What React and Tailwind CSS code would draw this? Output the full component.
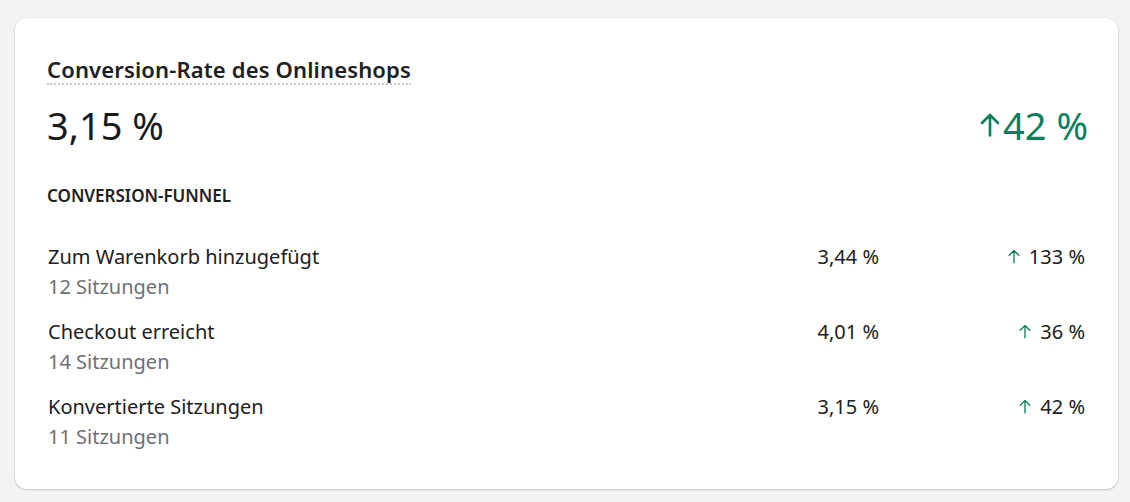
const rows = [
  { label: 'Zum Warenkorb hinzugefügt', sessions: '12 Sitzungen', rate: '3,44 %', change: '133 %' },
  { label: 'Checkout erreicht', sessions: '14 Sitzungen', rate: '4,01 %', change: '36 %' },
  { label: 'Konvertierte Sitzungen', sessions: '11 Sitzungen', rate: '3,15 %', change: '42 %' },
];

function ArrowUp({ className, width = 2 }) {
  return (
    <svg viewBox="0 0 20 24" fill="none" stroke="currentColor" strokeWidth={width} strokeLinecap="round" strokeLinejoin="round" className={className}>
      <path d="M10 22.5V2M2 10L10 2L18 10" />
    </svg>
  );
}

export default function App() {
  return (
    <div className="min-h-[502px] w-[1130px] bg-[#f3f3f5] pl-[15px] pr-[12px] pt-[18px] font-['Noto_Sans','Open_Sans',sans-serif]">
      <div className="rounded-[12px] bg-white pb-[37px] pl-[32px] pr-[30px] pt-[37px] shadow-[0_1px_2px_rgba(0,0,0,0.18),0_0_0_1px_rgba(0,0,0,0.03)]">
        {/* headline */}
        <div className="flex">
          <span className="border-b-2 border-dotted border-[#c9c9cc] text-[22px] font-semibold leading-[28px] tracking-[0.15px] text-[#202020]">
            Conversion-Rate des Onlineshops
          </span>
        </div>
        <div className="mt-[16px] flex items-center justify-between">
          <span className="text-[38px] leading-[48px] text-[#1a1a1a]">3,15 %</span>
          <span className="flex items-center text-[38px] leading-[48px] text-[#0c7f5d]">
            <ArrowUp width={2.6} className="mr-[3px] h-[24px] w-[20px]" />
            42 %
          </span>
        </div>

        <div className="mt-[37px] text-[17px] font-semibold uppercase leading-[20px] text-[#202020]">
          Conversion-Funnel
        </div>

        <div className="mt-[36px] flex flex-col gap-[15px]">
          {rows.map((r) => (
            <div key={r.label} className="flex items-start pl-[1px]">
              <div className="flex-1">
                <div className="text-[20px] leading-[30px] text-[#202020]">{r.label}</div>
                <div className="text-[20px] leading-[30px] text-[#6f7074]">{r.sessions}</div>
              </div>
              <div className="w-[200px] text-right text-[20px] leading-[30px] text-[#202020]">{r.rate}</div>
              <div className="flex w-[209px] items-center justify-end pr-[3px] text-[20px] leading-[30px] text-[#202020]">
                <ArrowUp width={2.2} className="mb-[2px] mr-[9px] h-[15px] w-[12px] text-[#0c7f5d]" />
                {r.change}
              </div>
            </div>
          ))}
        </div>
      </div>
    </div>
  );
}
